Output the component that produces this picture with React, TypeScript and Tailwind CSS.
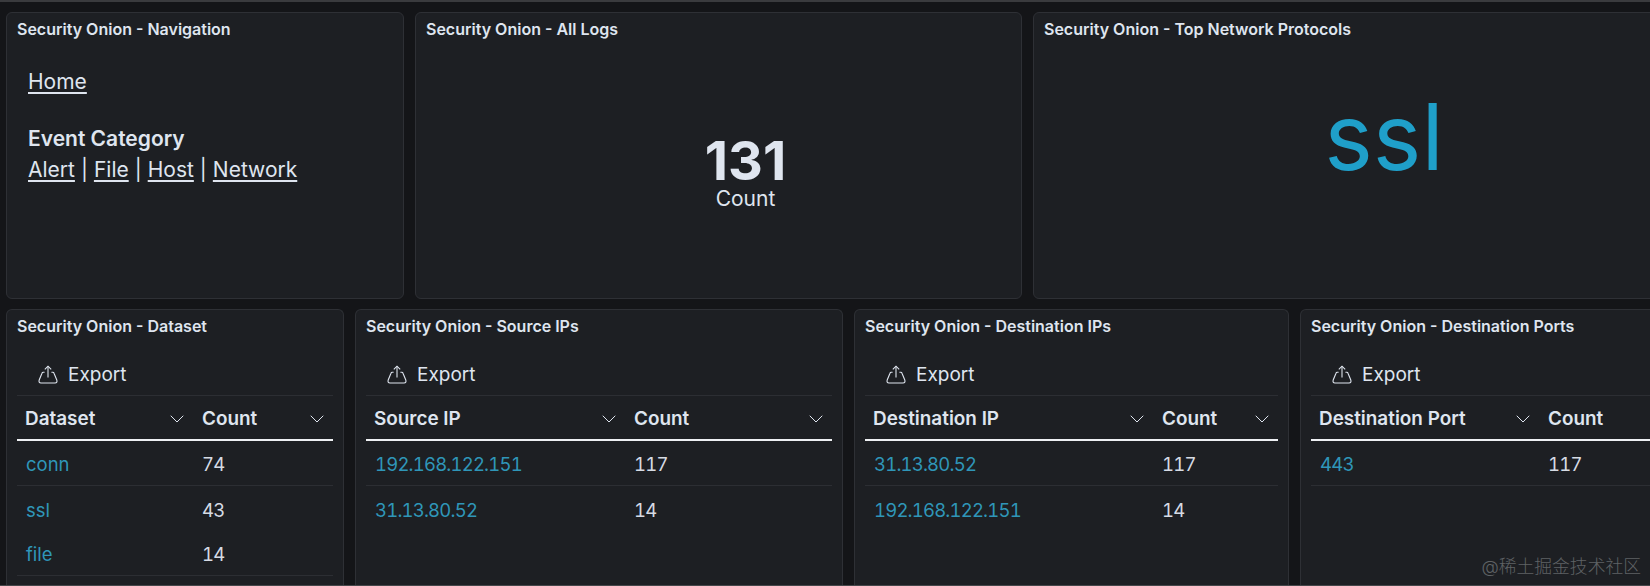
import { ChevronDown } from "lucide-react";
import type { ReactNode } from "react";

type Row = { name: string; count: number; divider?: boolean };

type TableProps = {
  title: string;
  column: string;
  className: string;
  nameCol: string;
  rows: Row[];
};

function ExportIcon() {
  return (
    <svg className="-mt-[2px]" width="20" height="19" viewBox="0 0 20 19" fill="none" stroke="currentColor" strokeWidth="1.1">
      <path d="M10 1.2v11.3" />
      <path d="M6.8 4.4 10 1.2l3.2 3.2" />
      <path d="M6.6 7.2H5.2c-.7 0-1 .3-1.2 1L1.2 15c-.6 1.7.1 3 1.8 3h14c1.7 0 2.4-1.3 1.8-3L16 8.2c-.2-.7-.5-1-1.2-1h-1.4" />
    </svg>
  );
}

function Panel({ title, className, children }: { title: string; className: string; children?: ReactNode }) {
  return (
    <section className={`flex shrink-0 flex-col rounded-[6px] border border-[#2e3035] bg-[#1d1f23] px-[10px] pt-[6px] ${className}`}>
      <h2 className="text-[16px] leading-[20px] font-semibold text-[#dfe5ef]">{title}</h2>
      {children}
    </section>
  );
}

function TablePanel({ title, column, className, nameCol, rows }: TableProps) {
  return (
    <Panel title={title} className={`rounded-b-none border-b-0 ${className}`}>
      <div className="mt-[19px] flex h-[40px] items-center gap-[10px] pl-[21px] text-[#dfe5ef]">
        <ExportIcon />
        <span className="text-[19px] leading-[24px]">Export</span>
      </div>
      <div className="h-[1px] bg-[#2c2e33]" />
      <div className="flex h-[45px] items-center border-b-2 border-[#eef0f3] pt-[4px] text-[18.9px] font-semibold text-[#dfe5ef]">
        <div className={`flex items-center justify-between pl-[8px] pr-[5px] ${nameCol}`}>
          <span>{column}</span>
          <ChevronDown size={24} strokeWidth={1} />
        </div>
        <div className="flex flex-1 items-center justify-between pl-[8px] pr-[4px]">
          <span>Count</span>
          <ChevronDown size={24} strokeWidth={1} />
        </div>
      </div>
      {rows.map((row) => (
        <div
          key={row.name}
          className={`flex h-[45px] items-center pt-[4px] text-[18.5px] tabular-nums ${row.divider ? "border-b border-[#2c2e33]" : ""}`}
        >
          <div className={`pl-[9px] text-[#2f96b8] ${/^\d/.test(row.name) ? "tracking-[-0.8px]" : ""} ${nameCol}`}>
            {row.name}
          </div>
          <div className="pl-[8px] tracking-[-0.8px] text-[#d6dbe4]">{row.count}</div>
        </div>
      ))}
    </Panel>
  );
}

export default function App() {
  return (
    <div
      className="relative flex h-[586px] w-[1650px] flex-col gap-[10px] overflow-hidden border-t-2 border-b border-t-[#3a3b3e] border-b-[#45474a] bg-[#141518] pt-[10px] pl-[6px]"
      style={{ fontFamily: "Inter, 'Noto Sans CJK SC', sans-serif" }}
    >
      <div className="flex h-[287px] shrink-0 gap-[11px]">
        <Panel title="Security Onion - Navigation" className="w-[398px]">
          <div className="px-[11px] pt-[27px] text-[21px] leading-[32px] text-[#dfe5ef]">
            <a className="underline underline-offset-[3px]">Home</a>
            <p className="mt-[26px] leading-[30px] font-semibold">Event Category</p>
            <div className="flex items-center">
              <a className="underline underline-offset-[3px]">Alert</a>
              <span className="mx-[6px]">|</span>
              <a className="underline underline-offset-[3px]">File</a>
              <span className="mx-[6px]">|</span>
              <a className="underline underline-offset-[3px]">Host</a>
              <span className="mx-[6px]">|</span>
              <a className="underline underline-offset-[3px]">Network</a>
            </div>
          </div>
        </Panel>
        <Panel title="Security Onion - All Logs" className="w-[607px]">
          <div className="flex flex-1 flex-col items-center pt-[98px] pl-[54px] text-[#dfe5ef]">
            <span className="text-[54px] leading-[48px] font-bold">131</span>
            <span className="text-[21px] leading-[28px]">Count</span>
          </div>
        </Panel>
        <Panel title="Security Onion - Top Network Protocols" className="w-[702px]">
          <div className="flex flex-1 justify-center pt-[42px]">
            <span className="text-[92px] leading-[112px] text-[#1f9fc9]">ssl</span>
          </div>
        </Panel>
      </div>
      <div className="flex min-h-0 flex-1 gap-[11px]">
        <TablePanel
          title="Security Onion - Dataset"
          column="Dataset"
          className="w-[338px]"
          nameCol="w-[177px]"
          rows={[
            { name: "conn", count: 74, divider: true },
            { name: "ssl", count: 43 },
            { name: "file", count: 14, divider: true },
          ]}
        />
        <TablePanel
          title="Security Onion - Source IPs"
          column="Source IP"
          className="w-[488px]"
          nameCol="w-[260px]"
          rows={[
            { name: "192.168.122.151", count: 117, divider: true },
            { name: "31.13.80.52", count: 14 },
          ]}
        />
        <TablePanel
          title="Security Onion - Destination IPs"
          column="Destination IP"
          className="w-[435px]"
          nameCol="w-[289px]"
          rows={[
            { name: "31.13.80.52", count: 117, divider: true },
            { name: "192.168.122.151", count: 14 },
          ]}
        />
        <TablePanel
          title="Security Onion - Destination Ports"
          column="Destination Port"
          className="w-[435px]"
          nameCol="w-[229px]"
          rows={[{ name: "443", count: 117, divider: true }]}
        />
      </div>
      <span className="absolute right-[9px] bottom-[7px] text-[17.8px] leading-[22px] font-light text-[#5f6265]">
        @稀土掘金技术社区
      </span>
    </div>
  );
}
